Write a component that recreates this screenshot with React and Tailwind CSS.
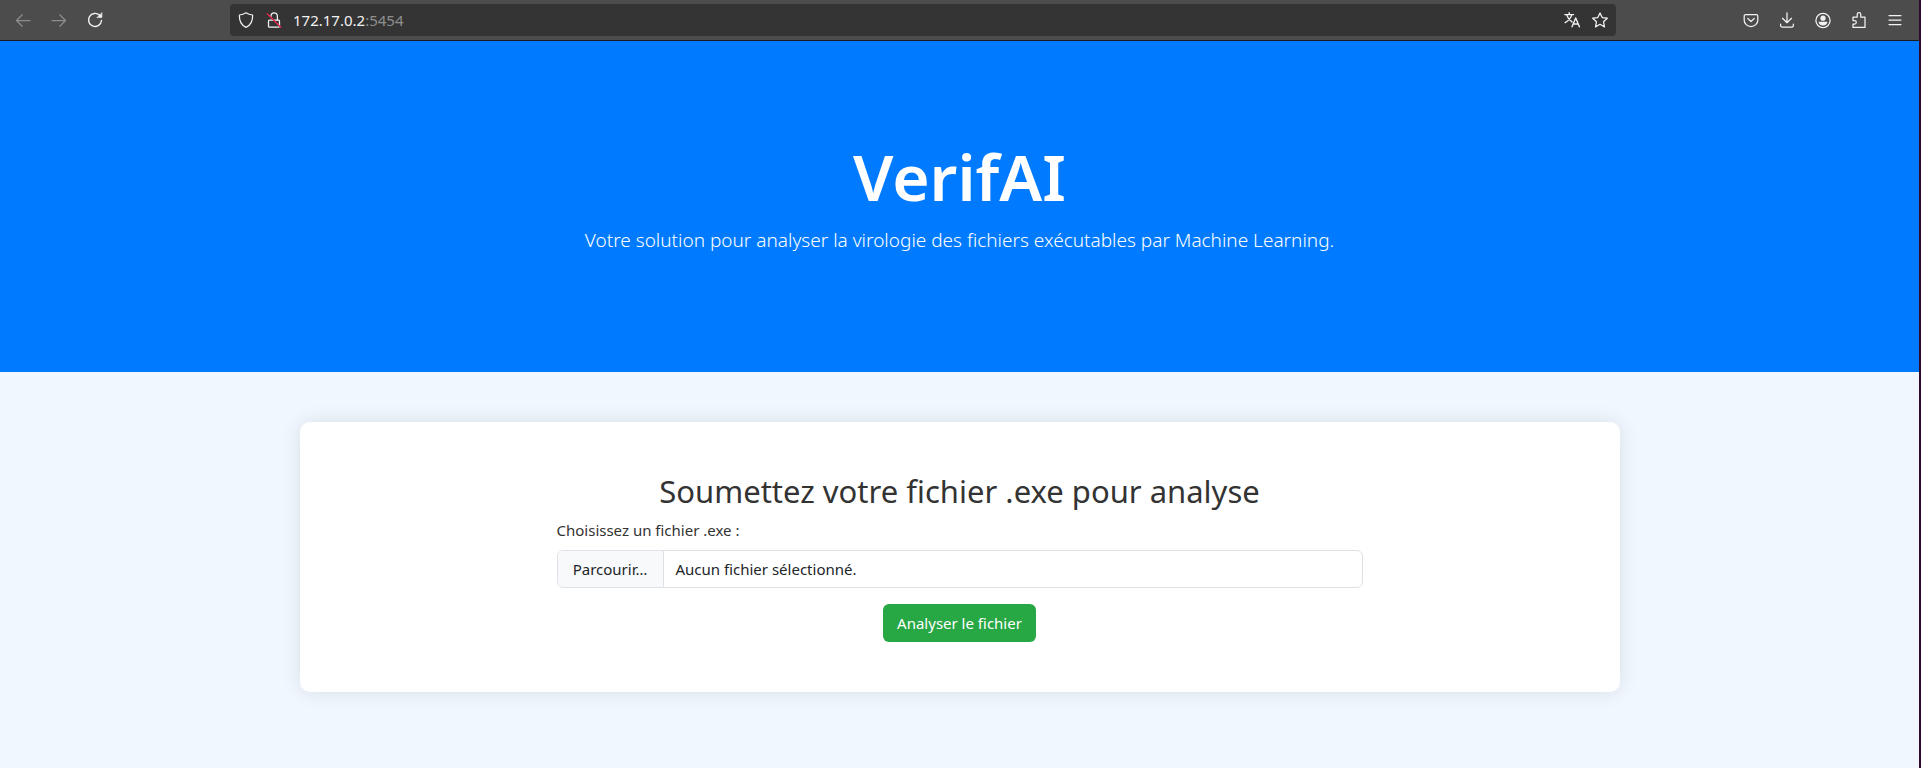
const ToolbarButton = ({ label, dim, children }) => (
  <button
    type="button"
    aria-label={label}
    className={`flex size-8 shrink-0 items-center justify-center ${dim ? "text-[#8d8d8d]" : "text-[#f2f2f2]"}`}
  >
    {children}
  </button>
);

const Icon = ({ children, width = 1.25 }) => (
  <svg
    viewBox="0 0 16 16"
    className="size-4 overflow-visible"
    fill="none"
    stroke="currentColor"
    strokeWidth={width}
    strokeLinecap="round"
    strokeLinejoin="round"
    aria-hidden="true"
  >
    {children}
  </svg>
);

function BrowserBar() {
  return (
    <header className="flex h-[41px] items-center gap-1 border-b border-[#1c1c1c] bg-[#4c4c4c] pr-2 pl-[7px]">
      <ToolbarButton label="Reculer" dim>
        <Icon>
          <path d="M15 8.500H1.800M7.200 2.800 1.500 8.500l5.700 5.700" />
        </Icon>
      </ToolbarButton>
      <ToolbarButton label="Avancer" dim>
        <Icon>
          <path d="M1 8.500h13.200M8.800 2.800l5.700 5.700-5.700 5.700" />
        </Icon>
      </ToolbarButton>
      <ToolbarButton label="Actualiser">
        <Icon width={1.4}>
          <path d="M12.600 3.300A6.500 6.500 0 1 0 14.500 8.500" />
          <path d="M14.900.9v4.700h-4.700z" fill="currentColor" strokeWidth="0.6" />
        </Icon>
      </ToolbarButton>

      <div className="mx-4 flex h-8 min-w-0 flex-1 items-center rounded-sm bg-[#343434] text-[#f2f2f2] xl:mx-[115px]">
        <button type="button" aria-label="Protection renforcée" className="ml-2 flex shrink-0">
          <Icon>
            <path d="M8 .8c1.900 1.300 4.300 2 6.600 2.200.3 5.400-1.700 10-6.600 12.400C3.100 13 1.100 8.400 1.400 3 3.700 2.800 6.100 2.100 8 .8z" />
          </Icon>
        </button>
        <button type="button" aria-label="Connexion non sécurisée" className="ml-3 flex shrink-0">
          <Icon>
            <rect x="2.500" y="8" width="11" height="7.200" rx="1" />
            <path d="M5 4.500V4a3.200 3.200 0 0 1 6.400 0v4" />
            <path d="m1.300 1.800 13.400 13.400" stroke="#e22850" strokeWidth="1.4" />
          </Icon>
        </button>
        <div className="ml-[11px] min-w-0 flex-1 truncate font-['Noto_Sans',sans-serif] text-[15px]">
          172.17.0.2<span className="text-[#8f8f8f]">:5454</span>
        </div>
        <button type="button" aria-label="Traduire la page" className="mr-3 flex shrink-0">
          <Icon width={1.4}>
            <path d="M.8 2.600h8.800M5.200.8v1.800M7.800 2.600C7 5.800 4.500 8.600 1.200 10.600M2.600 2.600c.8 2.800 3 5.600 5.400 7.400" />
            <path d="m8 14.800 3.700-8.800 3.700 8.800M9.200 12h5" />
          </Icon>
        </button>
        <button type="button" aria-label="Ajouter aux marque-pages" className="mr-2 flex shrink-0">
          <Icon>
            <path d="m8 .9 2.200 4.700 5.100.6-3.800 3.500 1 5.200L8 12.300l-4.500 2.600 1-5.200L.7 6.200l5.100-.6z" />
          </Icon>
        </button>
      </div>

      <ToolbarButton label="Pocket">
        <Icon>
          <path d="M2.600 2.500h10.800A1.400 1.400 0 0 1 14.800 3.900v4.300a6.800 6.300 0 0 1-13.600 0V3.900a1.400 1.400 0 0 1 1.400-1.400z" />
          <path d="m4.800 6.500 3.200 3 3.200-3" />
        </Icon>
      </ToolbarButton>
      <ToolbarButton label="Téléchargements">
        <Icon>
          <path d="M8 .8v9.700M3.500 6.300 8 10.700l4.500-4.400M1.600 12.200v1.300a1.500 1.500 0 0 0 1.500 1.500h9.800a1.500 1.500 0 0 0 1.500-1.500v-1.300" />
        </Icon>
      </ToolbarButton>
      <ToolbarButton label="Compte">
        <Icon>
          <circle cx="8" cy="8.500" r="7.100" />
          <circle cx="8" cy="6.200" r="2.600" fill="currentColor" stroke="none" />
          <path d="M3.600 9.700h8.800c0 2-1.900 3.900-4.400 3.900s-4.400-1.900-4.400-3.900z" fill="currentColor" stroke="none" />
        </Icon>
      </ToolbarButton>
      <ToolbarButton label="Extensions">
        <Icon>
          <path d="M2 8.500V5.200h4.200V2.500a1.800 1.800 0 0 1 3.600 0v2.700H14v10.200H2v-3.300h1.500a1.800 1.800 0 0 0 0-3.600z" />
        </Icon>
      </ToolbarButton>
      <ToolbarButton label="Menu">
        <Icon>
          <path d="M2 3.500h12M2 8h12M2 12.500h12" />
        </Icon>
      </ToolbarButton>
    </header>
  );
}

export default function App() {
  return (
    <div className="flex min-h-screen flex-col border-r-2 border-[#300a2c] bg-[#f0f7ff] font-['Noto_Sans',sans-serif] text-[15px] leading-6 text-[#333333]">
      <BrowserBar />
      <section className="bg-[#007bff] px-4 py-[100px] text-center text-white">
        <h1 className="mb-3 text-[64px] leading-[72px] font-semibold">VerifAI</h1>
        <p className="mb-4 text-[19px] leading-[31px] font-light">
          Votre solution pour analyser la virologie des fichiers exécutables par Machine Learning.
        </p>
      </section>
      <main className="px-4 py-[50px]">
        <div className="mx-auto max-w-[1320px] rounded-[10px] bg-white p-[50px] shadow-[0_0_20px_rgba(0,0,0,0.1)]">
          <form className="mx-auto max-w-[806px]" onSubmit={(e) => e.preventDefault()}>
            <h2 className="mb-2 text-center text-[31px] leading-[38px]">
              Soumettez votre fichier .exe pour analyse
            </h2>
            <label htmlFor="file" className="mb-2 block">
              Choisissez un fichier .exe :
            </label>
            <label
              htmlFor="file"
              className="mb-4 flex h-[38px] items-stretch overflow-hidden rounded-md border border-[#dee2e6] text-[#212529]"
            >
              <span className="flex w-[106px] shrink-0 items-center justify-center border-r border-[#dee2e6] bg-[#f8f9fa]">
                Parcourir…
              </span>
              <span className="flex items-center px-3">Aucun fichier sélectionné.</span>
              <input id="file" type="file" accept=".exe" className="sr-only" />
            </label>
            <div className="flex justify-center">
              <button type="submit" className="h-[38px] rounded-md bg-[#28a745] px-[14px] text-white">
                Analyser le fichier
              </button>
            </div>
          </form>
        </div>
      </main>
    </div>
  );
}
